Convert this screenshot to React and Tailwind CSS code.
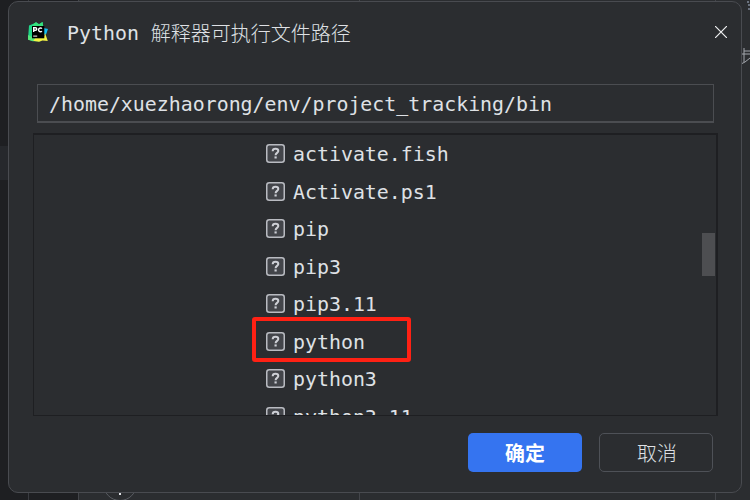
import React from "react";

const files = [
  "activate.fish",
  "Activate.ps1",
  "pip",
  "pip3",
  "pip3.11",
  "python",
  "python3",
  "python3.11",
];

function PyCharmIcon() {
  return (
    <svg viewBox="0 0 20 20" className="h-5 w-5 shrink-0">
      <path d="M1 3.5 6 1.5l2-1.3 3 2L14.5 0l.8 4v12l-3 3.3H5l-5-2z" fill="#21d789" />
      <path d="m6 1.5 2-1.3 3 2L14.5 0l.5 4.5H4z" fill="#35e27c" />
      <path d="m15.5 6 4.5 1-1.8 5-2.7 1.5z" fill="#10bdf2" />
      <path d="m17 11 2.8 8-5.3-.6-3.5 1.4-6.5-1 3-3.8h8.5z" fill="#f4f343" />
      <path d="m0 13 4 2h4l-3 4.3-5-1.5z" fill="#57e77a" />
      <path d="M4 4h12.3v12.3H4z" fill="#000" />
      <path d="M5.7 10V5.7h1.8a1.2 1.2 0 0 1 0 2.5H5.7M13.9 6.6a1.9 1.9 0 1 0 0 2.5" fill="none" stroke="#fff" strokeWidth="1.4" />
      <path d="M5.2 13.6h4v1h-4z" fill="#fff" />
    </svg>
  );
}

function UnknownFileIcon() {
  return (
    <svg viewBox="0 0 19 19" className="h-[19px] w-[19px] shrink-0">
      <rect x=".75" y=".75" width="17.5" height="17.5" rx="2.5" fill="#43454a" stroke="#b9bbc1" strokeWidth="1.5" />
      <path d="M6.7 7.2c0-1.6 1.2-2.4 2.8-2.4s2.8.8 2.8 2.2c0 1.8-2.7 2-2.7 4.2" fill="none" stroke="#ced0d6" strokeWidth="2" />
      <rect x="8.5" y="12.4" width="2.2" height="2.1" fill="#ced0d6" />
    </svg>
  );
}

function Backdrop() {
  return (
    <div className="absolute inset-0 flex bg-[#2b2d30]">
      <div className="flex w-[29px] flex-col border-r border-[#393b40] bg-[#1e1f22]">
        <div className="mt-[146px] h-[34px] bg-[#26282c]" />
      </div>
      <div className="w-[50px] border-r border-[#43454a] bg-[#1e1f22]" />
      <div className="w-[281px] border-r border-[#43454a]" />
      <div className="w-[356px] border-r border-[#43454a]" />
      <svg className="absolute bottom-0 left-[102px] h-[10px] w-9" viewBox="0 0 36 10">
        <circle cx="18" cy="-6" r="16.5" fill="none" stroke="#5a5d63" />
        <path d="M17 3h2v2h-2z" fill="#dfe1e5" />
      </svg>
      <svg className="absolute left-[741px] top-0 h-[70px] w-[9px]" viewBox="0 0 9 70" fill="none">
        <path d="M7 1v2M9 5H7m0 4h2" stroke="#a9b7cc" />
        <path d="M3 48v14M0 54h9M3 51h6M0 64l4-2 5-4" stroke="#a4a7ad" />
      </svg>
    </div>
  );
}

export default function App() {
  return (
    <div className="relative h-[500px] w-[750px] overflow-hidden bg-[#2b2d30] pl-2 pt-px font-['DejaVu_Sans_Mono','Noto_Sans_CJK_SC',monospace] text-[19.9px] leading-6 text-[#dfe1e5]">
      <Backdrop />
      <main className="relative flex h-[492px] w-[734px] flex-col rounded-[10px] border border-[#494b50] bg-[#2b2d30]">
        <header className="mt-[18px] flex h-6 items-center pl-[19px] pr-[14px]">
          <PyCharmIcon />
          <h1 className="ml-[19px] flex items-center whitespace-nowrap">
            <span className="pt-[3px]">Python</span>
            <span className="ml-3 pt-px font-['Noto_Sans_CJK_SC',sans-serif] text-[20px] font-light">解释器可执行文件路径</span>
          </h1>
          <button aria-label="关闭" className="ml-auto">
            <svg viewBox="0 0 12 12" className="h-3 w-3" stroke="#f0f1f2" strokeWidth="1.2">
              <path d="m0 0 12 12M12 0 0 12" />
            </svg>
          </button>
        </header>
        <div className="ml-7 mt-[40px] flex h-[39px] w-[677px] shrink-0 items-center whitespace-nowrap border border-b-2 border-[#4b4d51] pl-[11px] pt-[3px]">
          /home/xuezhaorong/env/project_tracking/bin
        </div>
        <section className="relative ml-6 mt-[10px] flex h-[283px] w-[685px] shrink-0 border border-r-2 border-t-2 border-[#1e1f22]">
          <ul className="flex flex-1 flex-col overflow-hidden pl-[232px]">
            {files.map((file) => (
              <li key={file} className="flex h-[37.5px] shrink-0 items-center gap-2">
                <UnknownFileIcon />
                <span className="pt-[3px]">{file}</span>
              </li>
            ))}
          </ul>
          <div className="mr-px mt-[98px] h-[43px] w-[13px] bg-[#4d4e51]" />
          <div className="absolute left-[218px] top-[182px] h-[45px] w-[159px] rounded-[3px] border-4 border-[#ff2114]" />
        </section>
        <footer className="mt-[17px] flex h-[39px] shrink-0 justify-end gap-[17px] pr-7 font-['Noto_Sans_CJK_SC',sans-serif]">
          <button className="flex h-[39px] w-[114px] items-center justify-center rounded-[5px] bg-[#3574f0] font-bold text-white">确定</button>
          <button className="flex h-[39px] w-[114px] items-center justify-center rounded-[5px] border-[1.5px] border-[#4e5157] pl-0.5 font-light">取消</button>
        </footer>
      </main>
    </div>
  );
}
